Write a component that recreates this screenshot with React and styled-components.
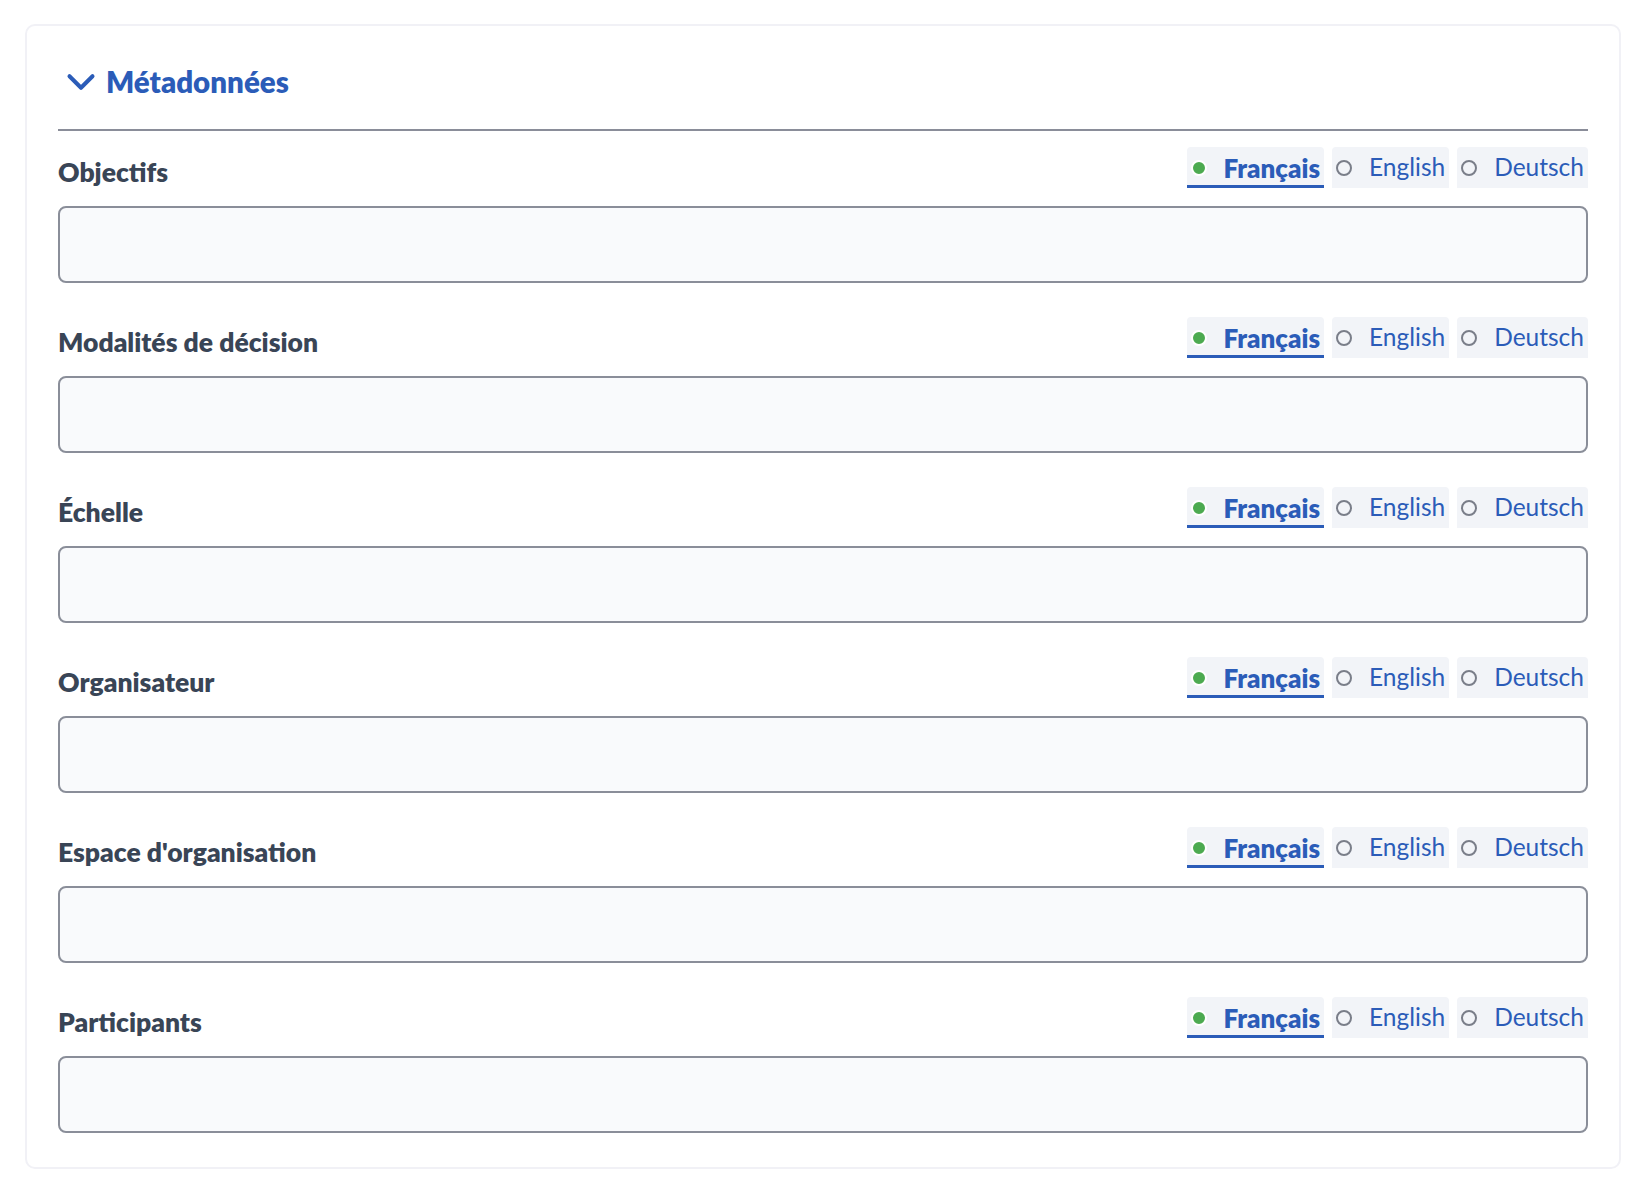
import React from 'react'
import styled, { createGlobalStyle } from 'styled-components'
import { ChevronDown } from 'lucide-react'

const GlobalStyle = createGlobalStyle`
  body {
    margin: 0;
    background: #ffffff;
    font-family: Lato, "Noto Sans", sans-serif;
  }
`

const fields = [
  'Objectifs',
  'Modalités de décision',
  'Échelle',
  'Organisateur',
  "Espace d'organisation",
  'Participants',
]

const languages = ['Français', 'English', 'Deutsch']

const LangTabs = ({ active }) => (
  <Tabs>
    {languages.map((lang, i) => (
      <Tab key={lang} active={i === active}>
        <Indicator active={i === active} />
        <TabLabel active={i === active}>{lang}</TabLabel>
      </Tab>
    ))}
  </Tabs>
)

const App = () => {
  return (
    <>
      <GlobalStyle />
      <Card>
        <Header>
          <ChevronDown size={46} strokeWidth={2.1} color="#2b5cb8" />
          <Title>Métadonnées</Title>
        </Header>
        <Fields>
          {fields.map((name) => (
            <Field key={name}>
              <TopRow>
                <Label>{name}</Label>
                <LangTabs active={0} />
              </TopRow>
              <TextInput type="text" aria-label={name} />
            </Field>
          ))}
        </Fields>
      </Card>
    </>
  )
}

export default App

const Card = styled.div`
  margin: 24px 25px;
  border: 2px solid #f1f1f6;
  border-radius: 10px;
  padding: 0 31px 34px;
  background: #ffffff;
`
const Header = styled.div`
  height: 94px;
  padding-top: 9px;
  display: flex;
  align-items: center;
  gap: 2px;
  border-bottom: 2px solid #8a8d99;
`
const Title = styled.h2`
  margin: 0;
  font-size: 29.5px;
  font-weight: 800;
  color: #2b5cb8;
  line-height: 1;
`
const Fields = styled.div`
  padding-top: 16px;
  display: flex;
  flex-direction: column;
  gap: 34px;
`
const Field = styled.div`
  display: flex;
  flex-direction: column;
  gap: 18px;
`
const TopRow = styled.div`
  display: flex;
  justify-content: space-between;
  align-items: flex-end;
  height: 41px;
`
const Label = styled.label`
  font-size: 26.5px;
  font-weight: 800;
  color: #394556;
  line-height: 1;
  margin-bottom: 3px;
`
const Tabs = styled.div`
  display: flex;
  gap: 8px;
  height: 100%;
`
const Tab = styled.div`
  box-sizing: border-box;
  height: 41px;
  display: flex;
  align-items: center;
  gap: 17px;
  padding: 3px 4px 0 4px;
  background: #f2f4f8;
  border-radius: 4px 4px 0 0;
  border-bottom: 3px solid ${(p) => (p.active ? '#2b5cb8' : 'transparent')};
  cursor: pointer;
`
const Indicator = styled.span`
  box-sizing: border-box;
  width: 16px;
  height: 16px;
  border-radius: 50%;
  flex-shrink: 0;
  background: ${(p) => (p.active ? '#4caa50' : 'transparent')};
  border: ${(p) => (p.active ? '2px solid #ffffff' : '2px solid #7a7e89')};
`
const TabLabel = styled.span`
  font-size: ${(p) => (p.active ? '26px' : '24.5px')};
  font-weight: ${(p) => (p.active ? 800 : 400)};
  color: #2b5cb8;
  line-height: 1;
`
const TextInput = styled.input`
  box-sizing: border-box;
  width: 100%;
  height: 77px;
  margin: 0;
  border: 2px solid #8a8e99;
  border-radius: 8px;
  background: #f9fafc;
  font-family: inherit;
  font-size: 22px;
  padding: 0 16px;
  outline: none;
`
